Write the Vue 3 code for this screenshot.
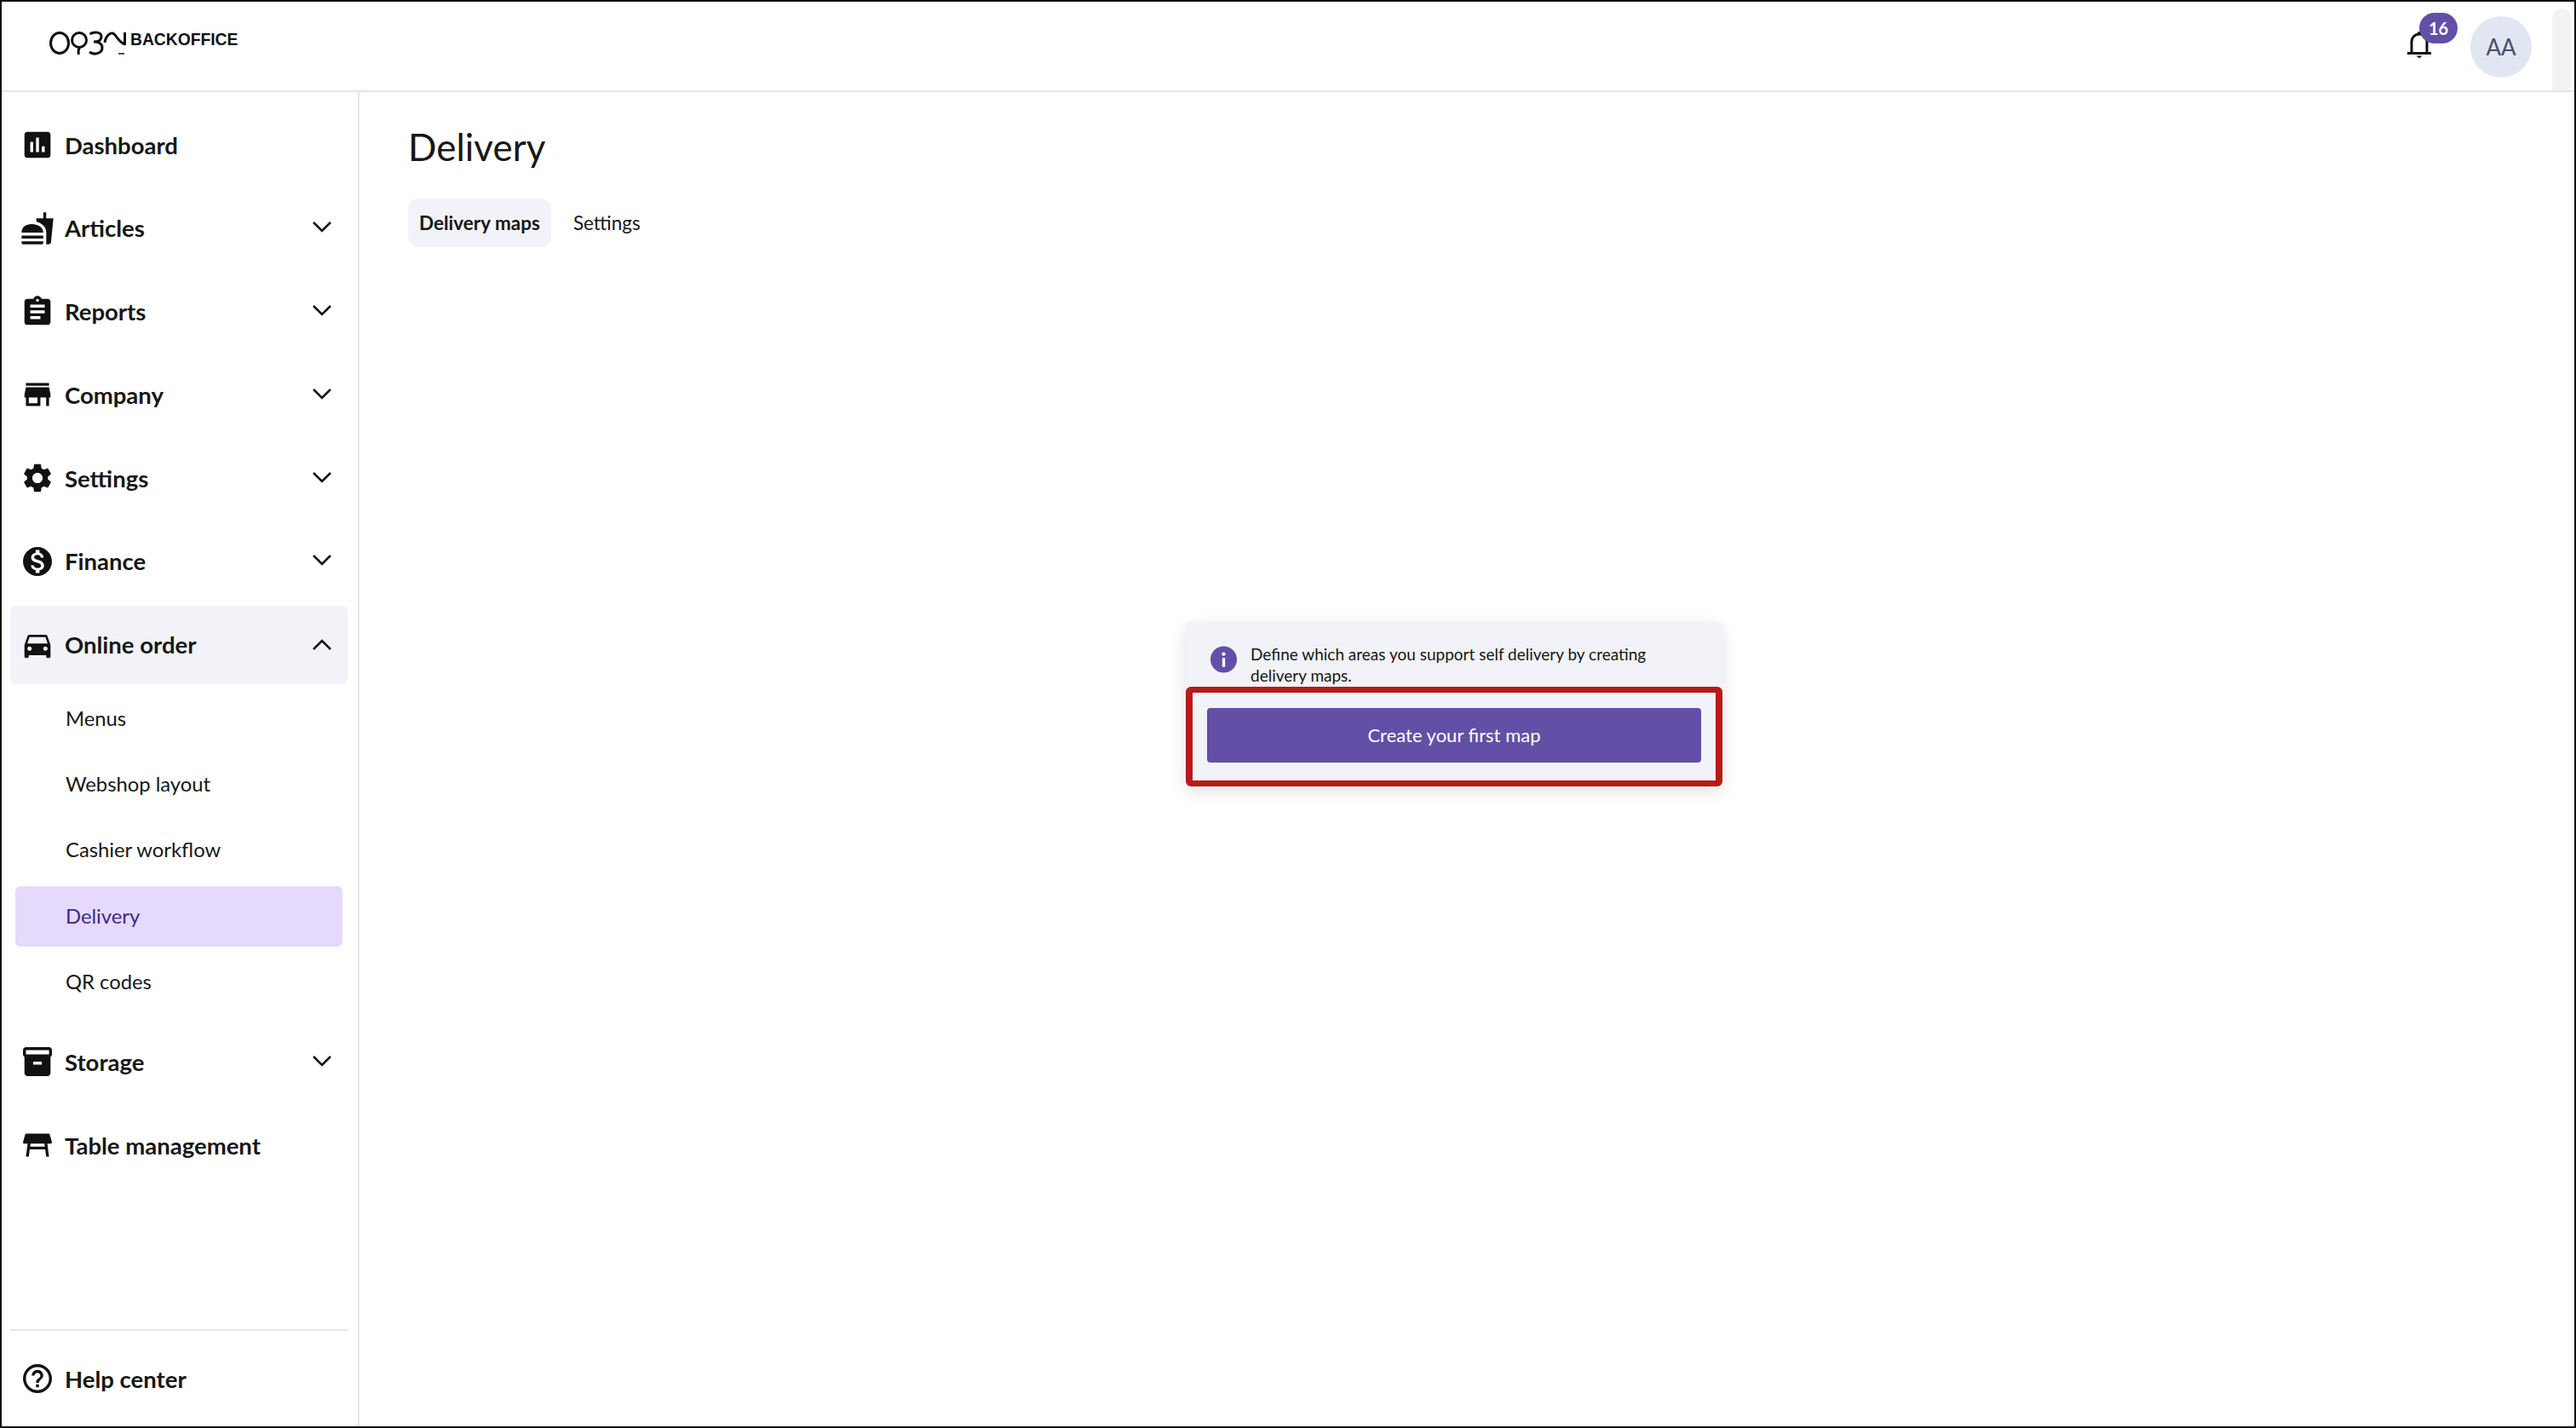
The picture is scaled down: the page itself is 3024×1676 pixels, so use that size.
<template>
  <div class="page">
    <!-- top bar -->
    <header class="topbar">
      <div class="brand">
        <svg class="brand-logo" viewBox="0 0 92 34" width="92" height="34" fill="none" stroke="#111" stroke-width="3">
          <ellipse cx="12" cy="15.500" rx="10.500" ry="12" />
          <circle cx="35" cy="12" r="8.500" />
          <path d="M35.500 20.500c-1.500 2.500-2 5-1 8.500" />
          <path d="M47.500 5C52 2 61 2 61 8c0 5-5 6-9 6 5 0 10 2 10 7 0 7-10 9-15 5" />
          <path d="M65 15c1-8 7-13 11-10 4 4 6 10 12.500 12" />
          <path d="M88.500 3v15" />
          <path d="M81 28h7" stroke-width="1.500" />
        </svg>
        <span class="brand-name">BACKOFFICE</span>
      </div>
      <div class="topbar-right">
        <div class="bell">
          <svg viewBox="0 0 28 34" width="28" height="34" fill="none" stroke="#111" stroke-width="3">
            <path d="M5 27V14a9 9 0 0 1 18 0v13" />
            <path d="M0 27.500h28" />
            <path d="M10.500 30.500h7l-3.500 3z" fill="#111" stroke="none" />
            <circle cx="14" cy="4" r="2" fill="#111" stroke="none" />
          </svg>
          <span class="badge">16</span>
        </div>
        <div class="avatar">AA</div>
        <div class="scroll-thumb"></div>
      </div>
    </header>

    <div class="body">
      <!-- side menu -->
      <aside class="sidebar">
        <nav class="menu">
          <template v-for="item in menu" :key="item.label">
            <div class="menu-item" :class="{ open: item.open }">
              <svg class="menu-icon" viewBox="1.400 1.400 21.200 21.200" width="36" height="36">
                <path :d="icons[item.icon]" fill="#111" />
              </svg>
              <span class="menu-label">{{ item.label }}</span>
              <svg v-if="item.arrow" class="chevron" :class="{ up: item.open }" viewBox="0 0 24 14" width="24" height="14" fill="none" stroke="#111" stroke-width="2.600">
                <path d="M2 2l10 10L22 2" />
              </svg>
            </div>
            <div v-if="item.children" class="submenu">
              <div
                v-for="sub in item.children"
                :key="sub"
                class="submenu-item"
                :class="{ active: sub === 'Delivery' }"
              >
                {{ sub }}
              </div>
            </div>
          </template>
        </nav>
        <div class="help">
          <div class="menu-item">
            <svg class="menu-icon" viewBox="1.400 1.400 21.200 21.200" width="36" height="36">
              <path :d="icons.help" fill="#111" />
            </svg>
            <span class="menu-label">Help center</span>
          </div>
        </div>
      </aside>

      <!-- content -->
      <main class="content">
        <h1 class="title">Delivery</h1>
        <div class="tabs">
          <div class="tab active">Delivery maps</div>
          <div class="tab">Settings</div>
        </div>
        <div class="card">
          <div class="card-info">
            <svg class="info-icon" viewBox="0 0 32 32" width="31" height="32">
              <circle cx="16" cy="16" r="16" fill="#6350a6" />
              <rect x="14.300" y="14" width="3.400" height="11" fill="#fff" />
              <circle cx="16" cy="9.500" r="2.200" fill="#fff" />
            </svg>
            <p class="card-text">Define which areas you support self delivery by creating delivery maps.</p>
          </div>
          <button class="card-btn">Create your first map</button>
          <!-- red highlight from the help article -->
          <div class="highlight"></div>
        </div>
      </main>
    </div>
  </div>
</template>

<script setup>
const menu = [
  { label: 'Dashboard', icon: 'dashboard' },
  { label: 'Articles', icon: 'articles', arrow: true },
  { label: 'Reports', icon: 'reports', arrow: true },
  { label: 'Company', icon: 'company', arrow: true },
  { label: 'Settings', icon: 'settings', arrow: true },
  { label: 'Finance', icon: 'finance', arrow: true },
  {
    label: 'Online order',
    icon: 'car',
    arrow: true,
    open: true,
    children: ['Menus', 'Webshop layout', 'Cashier workflow', 'Delivery', 'QR codes']
  },
  { label: 'Storage', icon: 'storage', arrow: true },
  { label: 'Table management', icon: 'table' }
]

// filled menu icons, 24 grid
const icons = {
  dashboard:
    'M19 3H5c-1.100 0-2 .9-2 2v14c0 1.100.9 2 2 2h14c1.100 0 2-.9 2-2V5c0-1.100-.9-2-2-2zM9 17H7v-7h2v7zm4 0h-2V7h2v10zm4 0h-2v-4h2v4z',
  articles:
    'M18.060 22.990h1.660c.84 0 1.530-.64 1.630-1.460L23 5.050h-5V1h-1.970v4.050h-4.970l.3 2.340c1.710.47 3.310 1.320 4.270 2.260 1.440 1.420 2.430 2.890 2.430 5.290v8.050zM1 21.990V21h15.030v.99c0 .55-.45 1-1 1H2c-.55 0-1-.45-1-1zm15.030-7c.01-4-4.010-5.990-8.030-5.990S1 11 1 15h15.030zM1.020 17h15v2h-15z',
  reports:
    'M19 3h-4.180C14.400 1.840 13.300 1 12 1c-1.300 0-2.400.84-2.820 2H5c-1.100 0-2 .9-2 2v14c0 1.100.9 2 2 2h14c1.100 0 2-.9 2-2V5c0-1.100-.9-2-2-2zm-7 0c.55 0 1 .45 1 1s-.45 1-1 1-1-.45-1-1 .45-1 1-1zm2 14H7v-2h7v2zm3-4H7v-2h10v2zm0-4H7V7h10v2z',
  company:
    'M20 4H4v2h16V4zm1 10v-2l-1-5H4l-1 5v2h1v6h10v-6h4v6h2v-6h1zm-9 4H6v-4h6v4z',
  settings:
    'M19.140 12.940c.04-.3.06-.61.06-.94 0-.32-.02-.64-.07-.94l2.030-1.580c.18-.14.23-.41.12-.61l-1.920-3.320c-.12-.22-.37-.29-.59-.22l-2.390.96c-.5-.38-1.030-.7-1.620-.94l-.36-2.540c-.04-.24-.24-.41-.48-.41h-3.840c-.24 0-.43.17-.47.41l-.36 2.540c-.59.24-1.130.57-1.620.94l-2.390-.96c-.22-.08-.47 0-.59.22L2.740 8.870c-.12.21-.08.47.12.61l2.030 1.580c-.05.3-.09.63-.09.94s.02.64.07.94l-2.030 1.580c-.18.14-.23.41-.12.61l1.920 3.320c.12.22.37.29.59.22l2.390-.96c.5.38 1.030.7 1.620.94l.36 2.540c.05.24.24.41.48.41h3.840c.24 0 .44-.17.47-.41l.36-2.540c.59-.24 1.130-.56 1.620-.94l2.390.96c.22.08.47 0 .59-.22l1.920-3.320c.12-.22.07-.47-.12-.61l-2.010-1.580zM12 15.600c-1.980 0-3.600-1.620-3.600-3.600s1.620-3.600 3.600-3.600 3.600 1.620 3.600 3.600-1.620 3.600-3.600 3.600z',
  finance:
    'M12 2C6.480 2 2 6.480 2 12s4.480 10 10 10 10-4.480 10-10S17.520 2 12 2zm1.410 16.090V20h-2.670v-1.930c-1.710-.36-3.160-1.460-3.270-3.400h1.960c.1 1.050.82 1.870 2.650 1.870 1.960 0 2.400-.98 2.400-1.590 0-.83-.44-1.610-2.670-2.140-2.480-.6-4.180-1.620-4.180-3.670 0-1.720 1.390-2.840 3.110-3.210V4h2.670v1.950c1.860.45 2.790 1.860 2.850 3.390H14.300c-.05-1.110-.64-1.870-2.220-1.870-1.500 0-2.400.68-2.400 1.640 0 .84.65 1.390 2.670 1.910s4.180 1.390 4.180 3.910c-.01 1.830-1.380 2.830-3.120 3.160z',
  car:
    'M18.920 6.010C18.720 5.420 18.160 5 17.500 5h-11c-.66 0-1.210.42-1.420 1.010L3 12v8c0 .55.45 1 1 1h1c.55 0 1-.45 1-1v-1h12v1c0 .55.45 1 1 1h1c.55 0 1-.45 1-1v-8l-2.080-5.990zM6.500 16c-.83 0-1.500-.67-1.500-1.500S5.670 13 6.500 13s1.500.67 1.500 1.500S7.330 16 6.500 16zm11 0c-.83 0-1.500-.67-1.500-1.500s.67-1.500 1.500-1.500 1.500.67 1.500 1.500-.67 1.500-1.500 1.500zM5 11l1.500-4.500h11L19 11H5z',
  storage:
    'M20 2H4c-1 0-2 .9-2 2v3.010c0 .72.43 1.340 1 1.690V20c0 1.100 1.100 2 2 2h14c.9 0 2-.9 2-2V8.700c.57-.35 1-.97 1-1.690V4c0-1.100-1-2-2-2zm-5 12H9v-2h6v2zm5-7H4V4l16-.02V7z',
  table:
    'M21.960 9.730l-1.430-5C20.410 4.300 20.010 4 19.560 4H4.440C3.990 4 3.590 4.300 3.470 4.730l-1.430 5C1.850 10.370 2.330 11 3 11h2.200L4 20h2l.67-5h10.670l.66 5h2l-1.190-9H21c.67 0 1.150-.63.96-1.270zM6.930 13l.27-2h9.600l.27 2H6.930z',
  help:
    'M11 18h2v-2h-2v2zm1-16C6.480 2 2 6.480 2 12s4.480 10 10 10 10-4.480 10-10S17.520 2 12 2zm0 18c-4.410 0-8-3.590-8-8s3.590-8 8-8 8 3.590 8 8-3.590 8-8 8zm0-14c-2.210 0-4 1.790-4 4h2c0-1.100.9-2 2-2s2 .9 2 2c0 2-3 1.750-3 5h2c0-2.250 3-2.500 3-5 0-2.210-1.790-4-4-4z'
}
</script>

<style>
html,
body {
  margin: 0;
  background: #fff;
}
</style>

<style scoped>
.page {
  width: 3024px;
  height: 1676px;
  box-sizing: border-box;
  border: 2px solid #111;
  display: flex;
  flex-direction: column;
  font-family: Lato, sans-serif;
  color: #171717;
  background: #fff;
  overflow: hidden;
}
.topbar {
  height: 106px;
  flex: none;
  box-sizing: border-box;
  border-bottom: 2px solid #e2e6f3;
  display: flex;
  justify-content: space-between;
  align-items: flex-start;
}
.brand {
  display: flex;
  align-items: flex-start;
  padding: 33px 0 0 56px;
  gap: 3px;
}
.brand-name {
  font-family: "Liberation Sans", Arial, sans-serif;
  font-weight: 700;
  font-size: 19.300px;
  line-height: 22px;
  margin-top: 1px;
  color: #111;
}
.topbar-right {
  display: flex;
  align-items: flex-start;
}
.bell {
  position: relative;
  margin-top: 33px;
  width: 28px;
  height: 34px;
  margin-right: 46px;
}
.badge {
  position: absolute;
  left: 14px;
  top: -20px;
  width: 45px;
  height: 36px;
  border-radius: 18px;
  background: #6350a6;
  color: #fff;
  font-weight: 700;
  font-size: 20px;
  line-height: 36px;
  text-align: center;
}
.avatar {
  width: 72px;
  height: 72px;
  margin-top: 17px;
  border-radius: 50%;
  background: #e2e6f3;
  color: #46506e;
  font-size: 26px;
  line-height: 72px;
  text-align: center;
}
.scroll-thumb {
  width: 22px;
  height: 96px;
  margin: 8px 4px 0 24px;
  border-radius: 10px 10px 0 0;
  background: #f3f3f4;
}
.body {
  flex: 1;
  display: flex;
  min-height: 0;
}
.sidebar {
  width: 420px;
  flex: none;
  box-sizing: border-box;
  border-right: 2px solid #e2e6f3;
  padding: 16px 12px 0 10px;
  display: flex;
  flex-direction: column;
}
.menu {
  flex: 1;
  display: flex;
  flex-direction: column;
  gap: 5.750px;
}
.menu-item {
  height: 92px;
  flex: none;
  box-sizing: border-box;
  padding: 0 18px 0 14px;
  display: flex;
  align-items: center;
  border-radius: 6px;
}
.menu-item.open {
  background: #f2f3f8;
}
.menu-icon {
  flex: none;
  overflow: visible;
}
.menu-label {
  flex: 1;
  margin-left: 14px;
  font-size: 27.500px;
  font-weight: 700;
  color: #171717;
}
.chevron {
  margin-top: -3px;
}
.chevron.up {
  margin-top: 1px;
  transform: rotate(180deg);
}
.submenu {
  display: flex;
  flex-direction: column;
  gap: 6.100px;
  margin-bottom: 7px;
}
.submenu-item {
  height: 71px;
  margin: 0 6px;
  padding-left: 59px;
  border-radius: 6px;
  font-size: 23.800px;
  line-height: 71px;
  color: #171717;
}
.submenu-item.active {
  background: #e5d9fc;
  color: #3b2a8c;
}
.help {
  border-top: 2px solid #e2e6f3;
  padding-top: 10px;
  height: 114px;
  box-sizing: border-box;
}
.content {
  flex: 1;
  padding: 0 0 0 57px;
  min-width: 0;
}
.title {
  margin: 32px 0 0;
  font-size: 44px;
  line-height: 64px;
  font-weight: 400;
}
.tabs {
  display: flex;
  gap: 13px;
  margin-top: 29px;
}
.tab {
  height: 57px;
  padding: 0 13px;
  border-radius: 12px;
  font-size: 22.500px;
  line-height: 57px;
}
.tab.active {
  background: #f2f3f8;
  font-weight: 700;
}
.card {
  position: relative;
  width: 630px;
  height: 193px;
  margin: 440px 0 0 913px;
  box-sizing: border-box;
  background: #f2f3f8;
  border-radius: 5px;
  box-shadow: 0 6px 20px rgba(0, 0, 0, 0.12);
}
.card-info {
  display: flex;
  align-items: flex-start;
  padding: 28px 0 0 29px;
}
.info-icon {
  flex: none;
}
.card-text {
  margin: -3px 0 0 16px;
  width: 500px;
  font-size: 19px;
  line-height: 25px;
  color: #171717;
}
.card-btn {
  position: absolute;
  left: 25px;
  top: 100.500px;
  width: 580px;
  height: 64px;
  border: none;
  border-radius: 4px;
  background: #6350a6;
  color: #fff;
  font-family: Lato, sans-serif;
  font-size: 22px;
}
.highlight {
  position: absolute;
  left: 0;
  top: 76px;
  width: 630px;
  height: 117px;
  box-sizing: border-box;
  border-style: solid;
  border-color: #b81a1a;
  border-width: 7px 8px;
  border-radius: 6px;
}
</style>
